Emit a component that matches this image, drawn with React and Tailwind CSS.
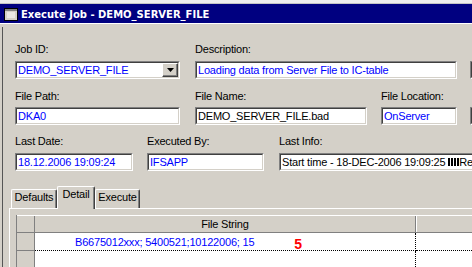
const font = "font-['Liberation_Sans',Arial,sans-serif]"

const WindowIcon = () => (
  <svg width="14" height="13" viewBox="0 0 14 13" className="shrink-0">
    <rect x="0.5" y="0.5" width="13" height="12" fill="#d4d0c8" stroke="#000" />
    <rect x="1" y="1" width="12" height="2" fill="#808080" />
    <path d="M3 5h8M3 7h8M3 9h8" stroke="#fff" />
  </svg>
)

const Box = ({ className = '', children }) => (
  <div
    className={`h-[18px] shrink-0 border border-t-[#808080] border-l-[#808080] border-b-white border-r-white ${className}`}
  >
    <div className="flex h-full items-center overflow-hidden whitespace-nowrap border border-t-[#404040] border-l-[#404040] border-b-[#d4d0c8] border-r-[#d4d0c8] bg-white pl-[1px]">
      {children}
    </div>
  </div>
)

const Field = ({ label, value, width, gap = 'mt-[5px]', color = 'text-[#0000ff]', dropdown }) => (
  <div className={`flex shrink-0 flex-col ${width}`}>
    <div className="h-[13px] leading-[13px] text-black">{label}</div>
    <Box className={gap}>
      <span className={`flex-1 leading-[14px] ${color}`}>{value}</span>
      {dropdown && (
        <div className="flex h-full w-[16px] shrink-0 items-center justify-center border border-t-white border-l-white border-b-[#404040] border-r-[#404040] bg-[#d4d0c8] shadow-[inset_-1px_-1px_#808080]">
          <svg width="7" height="4" viewBox="0 0 7 4">
            <path d="M0 0h7L3.5 4z" fill="#000" />
          </svg>
        </div>
      )}
    </Box>
  </div>
)

const CutField = ({ gap = 'mt-[5px]' }) => (
  <div className="flex w-[20px] shrink-0 flex-col">
    <div className="h-[13px]" />
    <Box className={`w-[20px] ${gap}`} />
  </div>
)

const Tab = ({ label, width, active }) => (
  <div
    className={`flex shrink-0 items-start justify-center rounded-t-[2px] border-t border-l border-r border-t-white border-l-white border-r-[#404040] bg-[#d4d0c8] shadow-[inset_-1px_0_#808080] ${width} ${
      active ? 'relative z-10 h-[23px] translate-y-px pt-[1px]' : 'h-[19px] pt-[1px]'
    }`}
  >
    <span className="leading-[13px]">{label}</span>
  </div>
)

const App = () => {
  return (
    <div className={`relative h-[267px] w-[472px] overflow-hidden bg-[#d4d0c8] text-[11px] tracking-[-0.2px] text-black ${font}`}>
      <div className="h-[3px] bg-[#eeeeee]" />
      <div className="h-[1px] bg-[#c4c4c4]" />

      <div className="flex h-[19px] items-center bg-[#000080] pl-[4px] pt-[1px]">
        <WindowIcon />
        <span className="ml-[3px] font-['DejaVu_Sans',Verdana,sans-serif] text-[10px] font-bold tracking-normal text-white">
          Execute Job - DEMO_SERVER_FILE
        </span>
      </div>
      <div className="h-[1px] bg-white" />

      <div className="pl-[2px] pt-[3px]">
        <div className="h-[300px] border-l border-[#555555] pt-[16px]">
          <div className="flex pl-[12px]">
            <Field label="Job ID:" value="DEMO_SERVER_FILE" width="w-[165px]" dropdown />
            <div className="w-[15px] shrink-0" />
            <Field label="Description:" value="Loading data from Server File to IC-table" width="w-[262px]" />
            <div className="w-[13px] shrink-0" />
            <CutField />
          </div>

          <div className="mt-[11px] flex pl-[12px]">
            <Field label="File Path:" value="DKA0" width="w-[165px]" gap="mt-[4px]" />
            <div className="w-[15px] shrink-0" />
            <Field label="File Name:" value="DEMO_SERVER_FILE.bad" width="w-[172px]" gap="mt-[4px]" color="text-black" />
            <div className="w-[14px] shrink-0" />
            <Field label="File Location:" value="OnServer" width="w-[76px]" gap="mt-[4px]" />
            <div className="w-[13px] shrink-0" />
            <CutField gap="mt-[4px]" />
          </div>

          <div className="mt-[10px] flex pl-[12px]">
            <Field label="Last Date:" value="18.12.2006 19:09:24" width="w-[118px]" />
            <div className="w-[14px] shrink-0" />
            <Field label="Executed By:" value="IFSAPP" width="w-[117px]" />
            <div className="w-[15px] shrink-0" />
            <div className="flex w-[260px] shrink-0 flex-col">
              <div className="h-[13px] leading-[13px]">Last Info:</div>
              <Box className="mt-[5px] w-[260px]">
                <span className="flex items-baseline leading-[14px] text-black">
                  Start time - 18-DEC-2006 19:09:25&nbsp;
                  <span className="inline-flex gap-[1px] self-center">
                    <span className="h-[8px] w-[2px] bg-black" />
                    <span className="h-[8px] w-[2px] bg-black" />
                    <span className="h-[8px] w-[2px] bg-black" />
                    <span className="h-[8px] w-[2px] bg-black" />
                  </span>
                  Re
                </span>
              </Box>
            </div>
          </div>

          <div className="mt-[15px] pl-[6px]">
            <div className="flex h-[22px] items-end pl-[2px]">
              <Tab label="Defaults" width="w-[46px]" />
              <Tab label="Detail" width="w-[38px]" active />
              <Tab label="Execute" width="w-[45px]" />
            </div>

            <div className="border-t border-l border-white pl-[6px] pt-[6px]">
              <div className="flex flex-col border-l border-[#808080]">
                <div className="flex h-[18px] border-t border-b border-t-white border-b-[#808080]">
                  <div className="w-[18px] shrink-0 border-r border-[#808080]" />
                  <div className="flex w-[381px] shrink-0 items-center justify-center border-r border-[#808080] leading-[14px]">
                    File String
                  </div>
                  <div className="flex-1 border-l border-white" />
                </div>

                <div className="flex h-[18px]">
                  <div className="w-[18px] shrink-0 border-r border-b border-[#808080]" />
                  <div className="flex w-[381px] shrink-0 items-center border-r border-b border-dotted border-black bg-white pl-[40px]">
                    <span className="leading-[14px] text-[#0000ff]">B6675012xxx; 5400521;10122006; 15</span>
                    <span className="ml-[40px] mt-[4px] text-[14px] font-bold leading-[14px] tracking-normal text-[#ff0000]">5</span>
                  </div>
                  <div className="flex-1 border-b border-dotted border-black bg-white" />
                </div>

                <div className="flex h-[18px]">
                  <div className="w-[18px] shrink-0 border-r border-b border-[#808080]" />
                  <div className="w-[381px] shrink-0 border-r border-dotted border-black bg-white" />
                  <div className="flex-1 bg-white" />
                </div>
              </div>
            </div>
          </div>
        </div>
      </div>
    </div>
  )
}

export default App
